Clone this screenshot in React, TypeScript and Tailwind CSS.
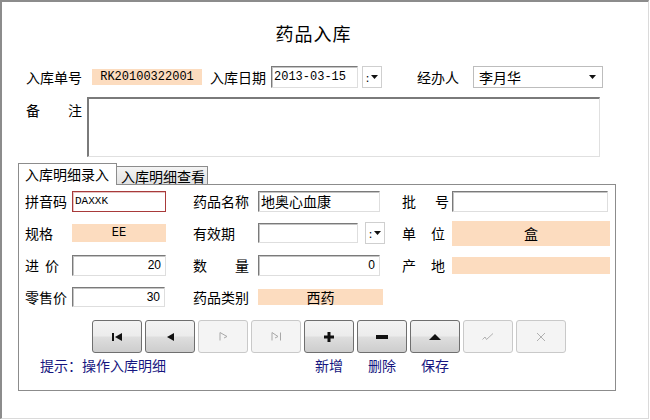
import type { ReactNode } from 'react';

// ============================================================
// PETITS COMPOSANTS
// ============================================================

const peach = 'bg-[#fcdcbf]';
const insetBox =
    'border border-[#dedede] border-t-[#7a7a7a] border-l-[#7a7a7a] shadow-[inset_1px_1px_0_#c4c4c4] bg-white';

function Spaced({ a, b, gap }: { a: string; b: string; gap: string }) {
    return (
        <span className={`flex ${gap}`}>
            <span>{a}</span>
            <span>{b}</span>
        </span>
    );
}

function DropBox({ className = '' }: { className?: string }) {
    return (
        <div className={`w-[20px] h-[22px] border border-[#cfcfcf] bg-white flex items-center justify-center gap-[2px] ${className}`}>
            <span className="text-[11px] leading-none">:</span>
            <svg width="7" height="4" viewBox="0 0 7 4"><path d="M0 0H7L3.5 4Z" fill="#111" /></svg>
        </div>
    );
}

function NavButton({ enabled, children }: { enabled: boolean; children: ReactNode }) {
    return (
        <div
            className={
                enabled
                    ? 'w-[50px] h-[33px] rounded-[3px] border border-[#6f6f6f] bg-[linear-gradient(to_bottom,#f3f3f3,#ececec_48%,#dedede_52%,#cdcdcd)] flex items-center justify-center'
                    : 'w-[50px] h-[33px] rounded-[3px] border border-[#c9c9c9] bg-[#f4f4f4] flex items-center justify-center'
            }
        >
            {children}
        </div>
    );
}

// ============================================================
// COMPOSANT PRINCIPAL
// ============================================================
export default function App() {
    return (
        <div className="w-[649px] h-[419px] bg-white border-t-2 border-l-2 border-[#8c8c8c] border-r border-b border-r-[#dadada] border-b-[#dadada] overflow-hidden text-[14px] leading-[20px] text-black font-['Noto_Sans_CJK_SC',sans-serif]">
            {/* Titre */}
            <div className="mt-[19px] h-[24px] pr-[23px] text-center text-[18px] leading-[24px] tracking-[1px]">药品入库</div>

            {/* En-tête du bon */}
            <div className="mt-[21px] h-[22px] pl-[24px] flex items-center">
                <span className="w-[56px]">入库单号</span>
                <div className={`ml-[10px] w-[110px] h-[16px] ${peach} text-center text-[12px] leading-[16px] font-['Liberation_Mono',monospace]`}>
                    RK20100322001
                </div>
                <span className="ml-[8px] w-[56px]">入库日期</span>
                <div className={`ml-[5px] w-[87px] h-[22px] ${insetBox} pl-[2px] text-[12px] leading-[20px] font-['Liberation_Mono',monospace]`}>
                    2013-03-15
                </div>
                <DropBox className="ml-[4px]" />
                <span className="ml-[35px] w-[42px]">经办人</span>
                <div className="ml-[14px] w-[130px] h-[22px] border border-[#bdbdbd] bg-white flex items-center justify-between pl-[5px] pr-[6px]">
                    <span>李月华</span>
                    <svg width="7" height="4" viewBox="0 0 7 4"><path d="M0 0H7L3.5 4Z" fill="#111" /></svg>
                </div>
            </div>

            {/* Remarques */}
            <div className="mt-[9px] pl-[24px] flex items-start">
                <div className="w-[56px] pt-[3px] flex justify-between">
                    <span>备</span>
                    <span>注</span>
                </div>
                <div className="ml-[5px] w-[513px] h-[60px] border border-[#e0e0e0] border-t-2 border-l-2 border-t-[#7a7a7a] border-l-[#7a7a7a] bg-white" />
            </div>

            {/* Onglets */}
            <div className="mt-[6px] ml-[16px] flex items-end">
                <div className="relative z-10 w-[99px] h-[22px] border border-b-0 border-[#8c8c8c] bg-white pl-[6px] leading-[21px]">入库明细录入</div>
                <div className="w-[91px] h-[19px] border border-l-0 border-[#8c8c8c] bg-[linear-gradient(to_bottom,#f4f4f4,#e2e2e2)] pl-[4px] leading-[18px]">入库明细查看</div>
            </div>

            {/* Détail */}
            <div className="-mt-px ml-[16px] w-[598px] h-[207px] border border-[#8c8c8c] px-[6px]">
                <div className="grid grid-cols-[47px_94px_27px_65px_127px_17px_50px_158px] auto-rows-[32px] items-center">
                    {/* Ligne 1 */}
                    <span>拼音码</span>
                    <div className="w-[94px] h-[21px] border border-[#a83a3a] shadow-[inset_1px_1px_0_#e6c4c4] bg-white pl-[2px] text-[11px] leading-[19px] font-['Liberation_Mono',monospace]">DAXXK</div>
                    <span />
                    <span>药品名称</span>
                    <div className={`w-[122px] h-[21px] ${insetBox} pl-[2px] leading-[19px]`}>地奥心血康</div>
                    <span />
                    <Spaced a="批" b="号" gap="gap-[19px]" />
                    <div className={`w-[156px] h-[21px] ${insetBox}`} />

                    {/* Ligne 2 */}
                    <span>规格</span>
                    <div className={`w-[94px] h-[18px] ${peach} text-center text-[12px] leading-[18px] font-['Liberation_Mono',monospace]`}>EE</div>
                    <span />
                    <span>有效期</span>
                    <div className="flex items-center">
                        <div className={`w-[100px] h-[20px] ${insetBox}`} />
                        <DropBox className="ml-[7px]" />
                    </div>
                    <span />
                    <Spaced a="单" b="位" gap="gap-[15px]" />
                    <div className={`w-[158px] h-[25px] ${peach} text-center leading-[25px]`}>盒</div>

                    {/* Ligne 3 */}
                    <Spaced a="进" b="价" gap="gap-[6px]" />
                    <div className={`w-[94px] h-[21px] ${insetBox} pr-[4px] text-right text-[12px] leading-[19px] font-['Liberation_Sans',sans-serif]`}>20</div>
                    <span />
                    <Spaced a="数" b="量" gap="gap-[28px]" />
                    <div className={`w-[122px] h-[21px] ${insetBox} pr-[4px] text-right text-[12px] leading-[19px] font-['Liberation_Sans',sans-serif]`}>0</div>
                    <span />
                    <Spaced a="产" b="地" gap="gap-[15px]" />
                    <div className={`w-[158px] h-[17px] ${peach}`} />

                    {/* Ligne 4 */}
                    <span>零售价</span>
                    <div className={`w-[93px] h-[20px] ${insetBox} pr-[4px] text-right text-[12px] leading-[18px] font-['Liberation_Sans',sans-serif]`}>30</div>
                    <span />
                    <span>药品类别</span>
                    <div className={`w-[125px] h-[16px] ${peach} text-center leading-[16px]`}>西药</div>
                    <span />
                    <span />
                    <span />
                </div>

                {/* Barre de navigation */}
                <div className="mt-[7px] ml-[67px] flex gap-[3px]">
                    <NavButton enabled>
                        <svg width="10" height="8" viewBox="0 0 10 8"><rect x="0" y="0" width="2" height="8" fill="#111" /><path d="M10 0V8L3 4Z" fill="#111" /></svg>
                    </NavButton>
                    <NavButton enabled>
                        <svg width="8" height="8" viewBox="0 0 8 8"><path d="M8 0V8L1 4Z" fill="#111" /></svg>
                    </NavButton>
                    <NavButton enabled={false}>
                        <svg width="9" height="9" viewBox="0 0 9 9"><path d="M1 0.5V8.5M1 0.5L8 4.5L5 6" stroke="#a8a8a8" fill="none" /></svg>
                    </NavButton>
                    <NavButton enabled={false}>
                        <svg width="11" height="9" viewBox="0 0 11 9"><path d="M1 0.5V8.5M1 0.5L7 4.5L4 6M9.5 0.5V8.5" stroke="#a8a8a8" fill="none" /></svg>
                    </NavButton>
                    <NavButton enabled>
                        <svg width="10" height="10" viewBox="0 0 10 10"><path d="M3.5 0H6.5V3.5H10V6.5H6.5V10H3.5V6.5H0V3.5H3.5Z" fill="#111" /></svg>
                    </NavButton>
                    <NavButton enabled>
                        <svg width="12" height="4" viewBox="0 0 12 4"><rect width="12" height="4" fill="#111" /></svg>
                    </NavButton>
                    <NavButton enabled>
                        <svg width="12" height="6" viewBox="0 0 12 6"><path d="M0 6H12L6 0Z" fill="#111" /></svg>
                    </NavButton>
                    <NavButton enabled={false}>
                        <svg width="12" height="8" viewBox="0 0 12 8"><path d="M0.5 6.5L3 4L4.5 6.5L11 0.5" stroke="#b0b0b0" fill="none" /></svg>
                    </NavButton>
                    <NavButton enabled={false}>
                        <svg width="10" height="10" viewBox="0 0 10 10"><path d="M1 1L9 9M9 1L1 9" stroke="#b0b0b0" fill="none" /></svg>
                    </NavButton>
                </div>

                {/* Libellés */}
                <div className="mt-[2px] ml-[15px] flex text-[#161680]">
                    <span className="w-[264px]">提示：操作入库明细</span>
                    <div className="flex gap-[3px]">
                        <span className="w-[50px] text-center">新增</span>
                        <span className="w-[50px] text-center">删除</span>
                        <span className="w-[50px] text-center">保存</span>
                    </div>
                </div>
            </div>
        </div>
    );
}
